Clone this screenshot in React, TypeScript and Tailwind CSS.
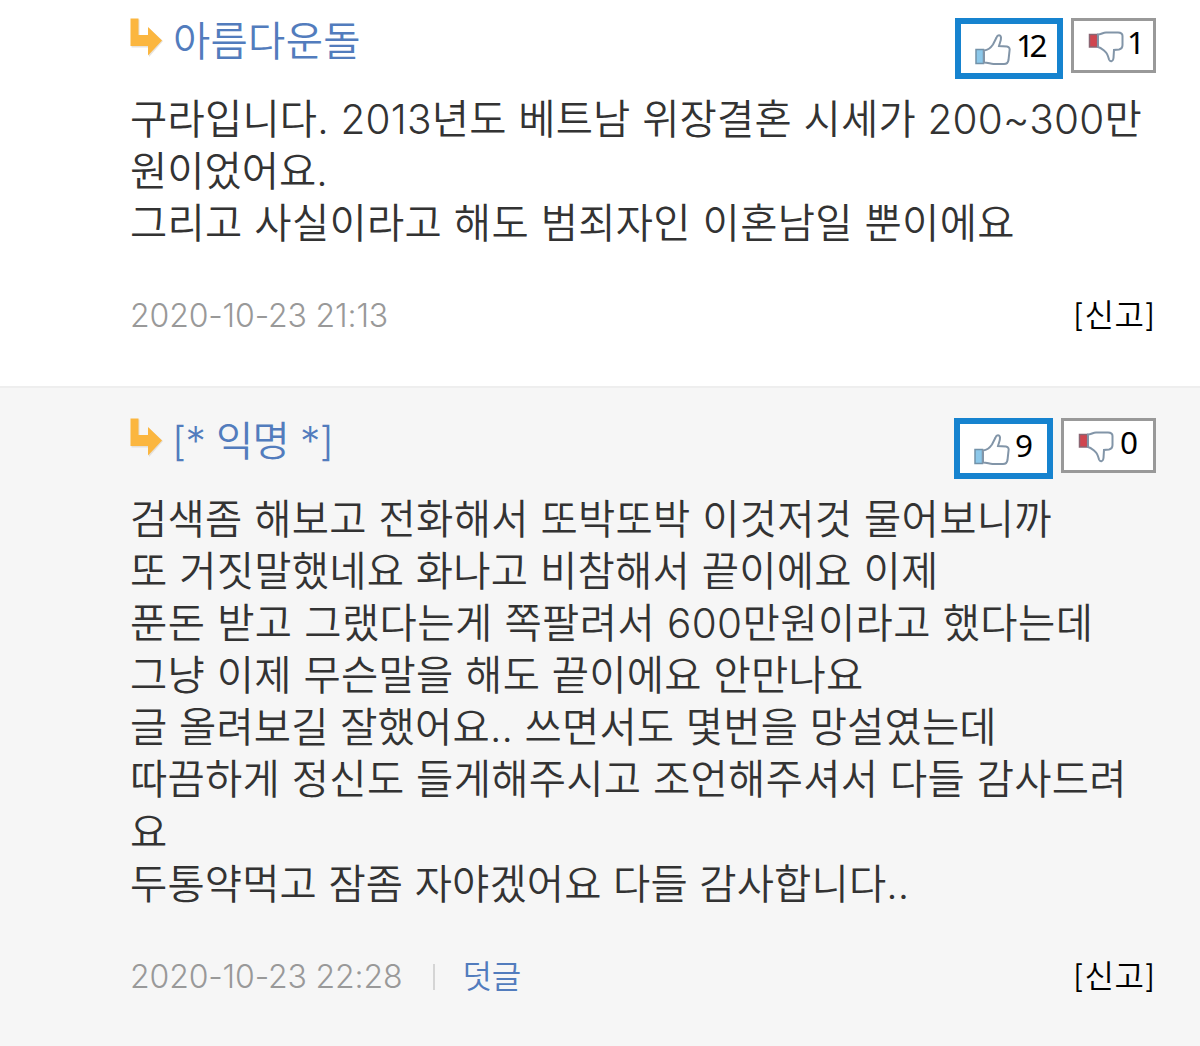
import { clsx } from 'clsx';

type Line = { text: string; className?: string };

type Comment = {
  id: number;
  author: string;
  lines: Line[];
  date: string;
  likes: number;
  dislikes: number;
  canReply: boolean;
};

const comments: Comment[] = [
  {
    id: 1,
    author: '아름다운돌',
    lines: [
      { text: '구라입니다. 2013년도 베트남 위장결혼 시세가 200~300만', className: 'tracking-[0.2px]' },
      { text: '원이었어요.' },
      { text: '그리고 사실이라고 해도 범죄자인 이혼남일 뿐이에요', className: 'tracking-[0.3px]' },
    ],
    date: '2020-10-23 21:13',
    likes: 12,
    dislikes: 1,
    canReply: false,
  },
  {
    id: 2,
    author: '[* 익명 *]',
    lines: [
      { text: '검색좀 해보고 전화해서 또박또박 이것저것 물어보니까', className: 'tracking-[0.28px]' },
      { text: '또 거짓말했네요 화나고 비참해서 끝이에요 이제', className: 'tracking-[0.25px]' },
      { text: '푼돈 받고 그랬다는게 쪽팔려서 600만원이라고 했다는데', className: 'tracking-[0.41px]' },
      { text: '그냥 이제 무슨말을 해도 끝이에요 안만나요', className: 'tracking-[0.26px]' },
      { text: '글 올려보길 잘했어요.. 쓰면서도 몇번을 망설였는데', className: 'tracking-[0.16px]' },
      { text: '따끔하게 정신도 들게해주시고 조언해주셔서 다들 감사드려', className: 'tracking-[0.28px]' },
      { text: '요' },
      { text: '두통약먹고 잠좀 자야겠어요 다들 감사합니다..', className: 'tracking-[0.12px]' },
    ],
    date: '2020-10-23 22:28',
    likes: 9,
    dislikes: 0,
    canReply: true,
  },
];

function ReplyArrow() {
  return (
    <svg width="34" height="40" viewBox="0 0 34 40" className="shrink-0">
      <path d="M1.500 1.500h8v16h9.500V10L33 23 19 39v-9.500H1.500z" fill="#ddd6ca" opacity=".7" />
      <path d="M.5.500h8v16.500H18V9l14 13.500L18 37.500V28H.5z" fill="#fbb63f" />
    </svg>
  );
}

function ThumbUp() {
  return (
    <svg width="36" height="32" viewBox="0 0 36 32" className="shrink-0">
      <path d="M1 15.500h7.500v14H1z" fill="#8cc8ea" stroke="#7291a8" strokeWidth="1.500" />
      <path
        d="M9 16.500c4.500-.5 7-3 9-6l3.500-7c1-3 4-3 4.500 0 .3 3-1.500 6-2 8.500l8 .5c2.500.5 3 2.500 2.500 4.500l-1 9c-.5 3-2 4-4.500 4H18.500c-3 0-5.500-1.500-9.500-1.500z"
        fill="#fff"
        stroke="#8295a8"
        strokeWidth="2"
      />
    </svg>
  );
}

function ThumbDown() {
  return (
    <svg width="36" height="32" viewBox="0 0 36 32" className="shrink-0">
      <path d="M1.500 3.500h8v12.500h-8z" fill="#cf4650" stroke="#8a6673" strokeWidth="1.500" />
      <path
        d="M10 3.500c3 0 5-2 8-2h12c3 0 4.500 1 4.500 3.500v9c0 3-1 4-3.500 4.500l-5 .5-.5 8c-.5 4-3.500 4-4.500 1.500-.8-3-1.500-6-4-8-2.500-2-4-4-7-4.500z"
        fill="#fff"
        stroke="#8295a8"
        strokeWidth="2"
      />
    </svg>
  );
}

function CommentItem({ comment, shaded }: { comment: Comment; shaded: boolean }) {
  return (
    <article
      className={clsx(
        'pl-[130px] pr-11',
        shaded ? 'h-[660px] bg-[#f6f6f6] border-t-2 border-[#eeeeee] pt-[30px]' : 'h-[386px] pt-[18px]',
      )}
    >
      <header className="flex h-[61px] items-start justify-between">
        <div className="flex items-start gap-[9px]">
          <ReplyArrow />
          <span
            className={clsx(
              'text-[40.500px] leading-[47px] whitespace-nowrap text-[#527cbd]',
              comment.author.startsWith('[') ? '-ml-px tracking-[-0.6px]' : 'tracking-[0.3px]',
            )}
          >
            {comment.author}
          </span>
        </div>
        <div className="flex items-start gap-2 font-['Noto_Sans',sans-serif] text-[31.500px] leading-none font-normal text-black">
          <button
            className={clsx(
              'flex h-[61px] gap-1.5 border-[6px] border-[#1683cf] bg-white pt-[10px] pl-[14px]',
              comment.likes > 9 ? 'w-[108px]' : 'w-[99px]',
            )}
          >
            <ThumbUp />
            <span className="-mt-[7px] -ml-px leading-9 tracking-[-4.500px]">{comment.likes}</span>
          </button>
          <button
            className={clsx(
              'flex h-[55px] gap-1.5 border-[3px] border-[#999] bg-white pt-[10px] pl-[14px]',
              comment.dislikes === 1 ? 'w-[85px]' : 'w-[95px]',
            )}
          >
            <ThumbDown />
            <span className={clsx('-mt-[7px] leading-9', comment.dislikes === 1 && '-ml-[3px]')}>
              {comment.dislikes}
            </span>
          </button>
        </div>
      </header>

      <div className="mt-[15px] text-[40.500px] leading-[52.100px] text-[#333]">
        {comment.lines.map((line) => (
          <p key={line.text} className={clsx('whitespace-nowrap', line.className)}>
            {line.text}
          </p>
        ))}
      </div>

      <footer className="mt-[42px] flex h-12 items-center">
        <time className="text-[32px] tracking-[-0.14px] text-[#999]">{comment.date}</time>
        {comment.canReply && (
          <>
            <span className="ml-[31px] h-[26px] w-0.5 bg-[#d5d5d5]" />
            <a className="ml-[27px] text-[32px] text-[#527cbd]">덧글</a>
          </>
        )}
        <a className="ml-auto text-[32px] tracking-[0.5px] text-black">[신고]</a>
      </footer>
    </article>
  );
}

export default function App() {
  return (
    <main className="h-[1046px] w-[1200px] overflow-hidden bg-white font-['Inter','Noto_Sans_CJK_KR',sans-serif] font-[350]">
      {comments.map((comment, index) => (
        <CommentItem key={comment.id} comment={comment} shaded={index % 2 === 1} />
      ))}
    </main>
  );
}
